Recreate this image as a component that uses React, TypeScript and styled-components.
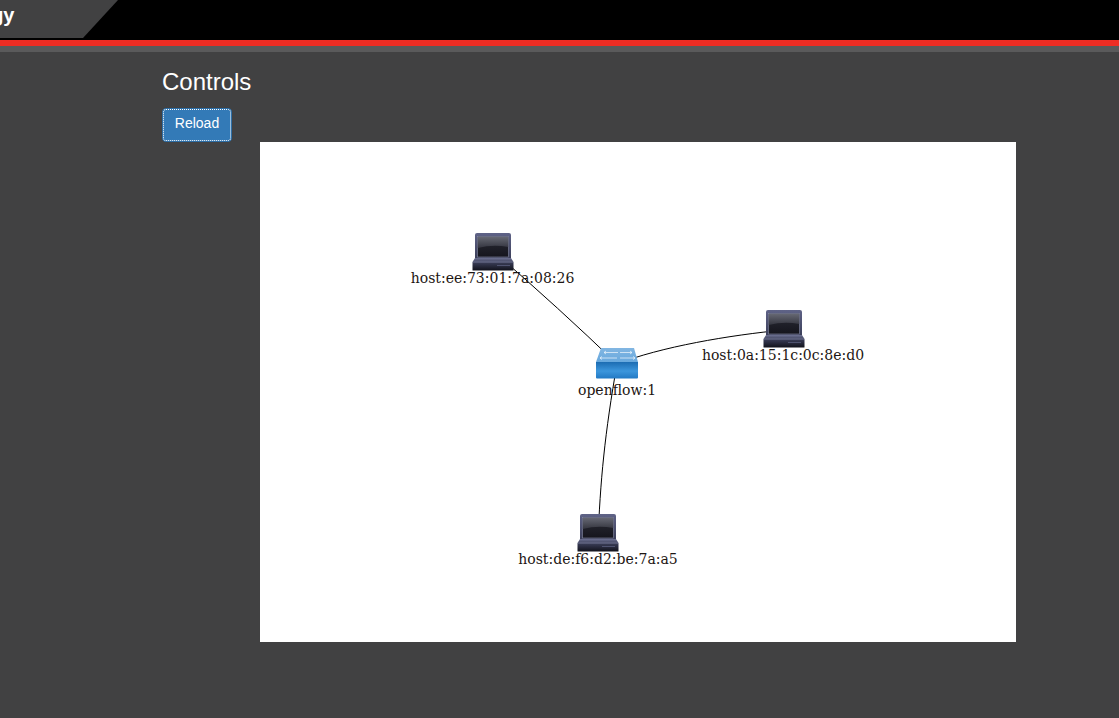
import styled, { createGlobalStyle } from "styled-components";

const GlobalStyle = createGlobalStyle`
  html, body {
    margin: 0;
    padding: 0;
    height: 100%;
    background: #414142;
    overflow: hidden;
    font-family: "Liberation Sans", Arial, sans-serif;
  }
`;

interface NodeProps {
  x: number;
  y: number;
  label: string;
  id: string;
  labelShift?: number;
}

function HostNode({ x, y, label, id, labelShift = 0 }: NodeProps) {
  return (
    <g transform={`translate(${x} ${y})`}>
      <defs>
        <linearGradient id={`${id}-body`} x1="0" y1="0" x2="0" y2="1">
          <stop offset="0" stopColor="#5f6387" />
          <stop offset="1" stopColor="#3c3f5a" />
        </linearGradient>
        <linearGradient id={`${id}-screen`} x1="0" y1="0" x2="0" y2="1">
          <stop offset="0" stopColor="#2a2b35" />
          <stop offset="1" stopColor="#15151d" />
        </linearGradient>
        <linearGradient id={`${id}-glare`} x1="0" y1="0" x2="0" y2="1">
          <stop offset="0" stopColor="#666873" />
          <stop offset="1" stopColor="#34353f" />
        </linearGradient>
        <linearGradient id={`${id}-base`} x1="0" y1="0" x2="0" y2="1">
          <stop offset="0" stopColor="#6d7192" />
          <stop offset="0.4" stopColor="#373a53" />
          <stop offset="1" stopColor="#11121b" />
        </linearGradient>
      </defs>
      <path d="M-18 -27 Q-18 -29 -16 -29 H16 Q18 -29 18 -27 V-4 H-18 Z" fill={`url(#${id}-body)`} />
      <rect x="-15.5" y="-25.5" width="31" height="20.5" fill={`url(#${id}-screen)`} stroke="#868aa6" strokeWidth="0.6" />
      <path d="M-15.2 -25.2 H15.2 V-15 Q0 -18 -15.2 -14 Z" fill={`url(#${id}-glare)`} />
      <path d="M-18 -4 H18 L20.5 0 V8 Q20.5 8.5 20 8.5 H-20 Q-20.5 8.5 -20.5 8 V0 Z" fill={`url(#${id}-base)`} />
      <rect x="-20" y="-0.5" width="40" height="1" fill="#6f7390" />
      <rect x="4" y="3" width="13" height="1" fill="#4f5370" />
      <text x={labelShift} y="20.5" textAnchor="middle">{label}</text>
    </g>
  );
}

function SwitchNode({ x, y, label, id }: NodeProps) {
  return (
    <g transform={`translate(${x} ${y})`}>
      <defs>
        <linearGradient id={`${id}-front`} x1="0" y1="0" x2="0" y2="1">
          <stop offset="0" stopColor="#1c6cb2" />
          <stop offset="0.55" stopColor="#3c96dc" />
          <stop offset="1" stopColor="#2279c4" />
        </linearGradient>
        <linearGradient id={`${id}-top`} x1="0" y1="0" x2="0" y2="1">
          <stop offset="0" stopColor="#82b6e2" />
          <stop offset="1" stopColor="#68a9de" />
        </linearGradient>
      </defs>
      <path d="M-16 -16 H17 L21 -2 H-21 Z" fill={`url(#${id}-top)`} />
      <path d="M-21 -2 H21 V13.5 Q21 14.5 20 14.5 H-20 Q-21 14.5 -21 13.5 Z" fill={`url(#${id}-front)`} />
      <g stroke="#f2f8fd" strokeWidth="0.7" fill="none">
        <path d="M-13 -11.5 H1 M-13 -11.5 l2 -1.5 M-13 -11.5 l2 1.5" />
        <path d="M3 -11.5 H15 M15 -11.5 l-2 -1.5 M15 -11.5 l-2 1.5" />
        <path d="M-17 -6 H0 M-17 -6 l2 -1.5 M-17 -6 l2 1.5" />
        <path d="M3 -6 H18 M18 -6 l-2 -1.5 M18 -6 l-2 1.5" />
      </g>
      <text x="0" y="31" textAnchor="middle">{label}</text>
    </g>
  );
}

export default function App() {
  return (
    <>
      <GlobalStyle />
      <TopBar>
        <TitleTab>
          <Title>Topology</Title>
        </TitleTab>
      </TopBar>
      <Main>
        <Heading>Controls</Heading>
        <ReloadButton>Reload</ReloadButton>
        <Canvas>
          <Diagram viewBox="0 0 756 500" width="756" height="500">
            <g fill="none" stroke="#000" strokeWidth="1">
              <path d="M233 109 Q300 167 357 222" />
              <path d="M357 222 C400 205 470 193 524 188" />
              <path d="M357 222 C345 290 340 340 338 400" />
            </g>
            <g>
              <HostNode id="h1" x={233} y={120} label="host:ee:73:01:7a:08:26" labelShift={-0.5} />
              <HostNode id="h2" x={524} y={197} label="host:0a:15:1c:0c:8e:d0" labelShift={-1} />
              <HostNode id="h3" x={338} y={401} label="host:de:f6:d2:be:7a:a5" />
              <SwitchNode id="s1" x={357} y={222} label="openflow:1" />
            </g>
          </Diagram>
        </Canvas>
      </Main>
    </>
  );
}

const TopBar = styled.header`
  height: 40px;
  background: #000;
  border-bottom: 6px solid #ee2d24;
  box-shadow: 0 6px 0 #5a5a5b;
  display: flex;
`;

const TitleTab = styled.div`
  width: 118px;
  height: 38px;
  background: #414142;
  clip-path: polygon(0 0, 100% 0, 83px 100%, 0 100%);
  display: flex;
  align-items: center;
`;

const Title = styled.span`
  margin-left: -74px;
  margin-top: -7px;
  color: #fff;
  font-size: 20px;
  font-weight: 700;
  white-space: nowrap;
`;

const Main = styled.main`
  padding: 21px 0 0 162px;
  display: flex;
  flex-direction: column;
  align-items: flex-start;
`;

const Heading = styled.h3`
  margin: 0 0 12px;
  height: 29px;
  color: #fff;
  font-size: 24px;
  font-weight: 400;
  line-height: 29px;
`;

const ReloadButton = styled.button`
  width: 70px;
  height: 34px;
  padding: 0 0 5px;
  border: 1px solid #2e6da4;
  border-radius: 4px;
  background: #337ab7;
  outline: 1px dotted #fff;
  outline-offset: -2px;
  color: #fff;
  font-family: inherit;
  font-size: 14px;
  cursor: pointer;
`;

const Canvas = styled.div`
  width: 756px;
  height: 500px;
  margin-left: 98px;
  background: #fff;
`;

const Diagram = styled.svg`
  display: block;
  font-family: "DejaVu Serif", serif;
  font-size: 14px;
  fill: #1d1613;
`;
